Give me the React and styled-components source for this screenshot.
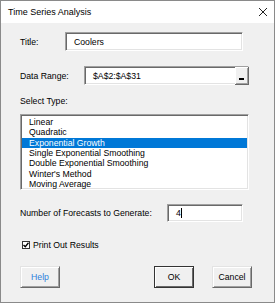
import React from "react";
import styled, { createGlobalStyle } from "styled-components";

const Global = createGlobalStyle`
  body {
    margin: 0;
    background: #ffffff;
    font-family: "Liberation Sans", Arial, sans-serif;
  }
`;

const Window = styled.div`
  width: 275px;
  height: 303px;
  box-sizing: border-box;
  border: 1px solid #8a8a8a;
  display: flex;
  flex-direction: column;
  background: #f0f0f0;
`;

const TitleBar = styled.div`
  height: 22px;
  background: #ffffff;
  display: flex;
  align-items: center;
  justify-content: space-between;
  padding: 0 6px 0 7px;
  font-size: 9px;
  color: #000;
`;

const Body = styled.div`
  flex: 1;
  display: flex;
  flex-direction: column;
  padding-left: 19px;
  font-size: 8.7px;
  color: #000;
`;

const Row = styled.div`
  display: flex;
  align-items: center;
  height: ${({ h }) => h}px;
  margin-top: ${({ top }) => top}px;
`;

const Label = styled.div`
  width: ${({ w }) => w}px;
  flex-shrink: 0;
  white-space: nowrap;
`;

const Field = styled.div`
  width: ${({ w }) => w}px;
  height: 100%;
  box-sizing: border-box;
  background: #ffffff;
  border: 1px solid;
  border-color: #a0a0a0 #ffffff #ffffff #a0a0a0;
  box-shadow: inset 1px 1px #696969, inset -1px -1px #e3e3e3;
  display: flex;
  align-items: center;
  padding-left: 8px;
`;

const FieldText = styled.span`
  flex: 1;
  white-space: nowrap;
`;

const Caret = styled.span`
  display: inline-block;
  width: 1px;
  height: 10px;
  background: #000;
  vertical-align: middle;
  margin-left: 0;
`;

const RefButton = styled.div`
  width: 14px;
  align-self: stretch;
  margin: 0 -1px -1px 0;
  box-sizing: border-box;
  background: #f0f0f0;
  border-right: 1px solid #696969;
  border-bottom: 1px solid #696969;
  box-shadow: inset 1px 1px #ffffff, inset -1px -1px #a0a0a0;
  display: flex;
  align-items: flex-end;
  justify-content: center;
  padding-bottom: 4px;
`;

const RefBar = styled.span`
  width: 5px;
  height: 2px;
  background: #000;
`;

const SectionLabel = styled.div`
  margin-top: 10px;
  height: 12px;
  line-height: 12px;
`;

const ListBox = styled.div`
  margin-top: 7px;
  width: 229px;
  height: 76px;
  box-sizing: border-box;
  background: #ffffff;
  border: 1px solid;
  border-color: #a0a0a0 #ffffff #ffffff #a0a0a0;
  box-shadow: inset 1px 1px #696969, inset -1px -1px #e3e3e3;
  padding: 2px 1px 0 1px;
`;

const ListItem = styled.div`
  height: 10.33px;
  line-height: 10.33px;
  padding-left: 7px;
  white-space: nowrap;
  background: ${({ selected }) => (selected ? "#0078d7" : "transparent")};
  color: ${({ selected }) => (selected ? "#ffffff" : "#000")};
`;

const CheckBox = styled.span`
  width: 8px;
  height: 8px;
  box-sizing: border-box;
  margin-left: 2px;
  margin-right: 3px;
  border: 1px solid #333;
  background: #fff;
  display: flex;
  align-items: center;
  justify-content: center;
`;

const ButtonRow = styled.div`
  margin-top: 17px;
  width: 232px;
  height: 22px;
  display: flex;
  justify-content: space-between;
`;

const ButtonGroup = styled.div`
  display: flex;
  gap: 18px;
`;

const Button = styled.div`
  width: 40px;
  height: 22px;
  box-sizing: border-box;
  background: #f0f0f0;
  border: 1px solid;
  border-color: ${({ primary }) =>
    primary ? "#333 #333 #333 #333" : "#e3e3e3 #696969 #696969 #e3e3e3"};
  box-shadow: ${({ primary }) =>
    primary
      ? "inset 1px 1px #ffffff, inset -1px -1px #696969"
      : "inset 1px 1px #ffffff, inset -1px -1px #a0a0a0"};
  display: flex;
  align-items: center;
  justify-content: center;
  color: ${({ link }) => (link ? "#2f80dc" : "#000")};
`;

const types = [
  "Linear",
  "Quadratic",
  "Exponential Growth",
  "Single Exponential Smoothing",
  "Double Exponential Smoothing",
  "Winter's Method",
  "Moving Average",
];

export default function App() {
  return (
    <>
      <Global />
      <Window>
        <TitleBar>
          <span>Time Series Analysis</span>
          <svg width="10" height="10" viewBox="0 0 10 10">
            <path d="M1 1 L9 9 M9 1 L1 9" stroke="#222" strokeWidth="1" />
          </svg>
        </TitleBar>
        <Body>
          <Row h={19} top={9}>
            <Label w={45}>Title:</Label>
            <Field w={178}>
              <FieldText>Coolers</FieldText>
            </Field>
          </Row>
          <Row h={19} top={15}>
            <Label w={64}>Data Range:</Label>
            <Field w={165}>
              <FieldText>$A$2:$A$31</FieldText>
              <RefButton>
                <RefBar />
              </RefButton>
            </Field>
          </Row>
          <SectionLabel>Select Type:</SectionLabel>
          <ListBox>
            {types.map((t) => (
              <ListItem key={t} selected={t === "Exponential Growth"}>
                {t}
              </ListItem>
            ))}
          </ListBox>
          <Row h={18} top={14}>
            <Label w={147}>Number of Forecasts to Generate:</Label>
            <Field w={76}>
              <FieldText>
                4<Caret />
              </FieldText>
            </Field>
          </Row>
          <Row h={9} top={18}>
            <CheckBox>
              <svg width="6" height="6" viewBox="0 0 6 6">
                <path d="M0.5 3 L2.3 4.8 L5.5 0.8" stroke="#000" strokeWidth="1.4" fill="none" />
              </svg>
            </CheckBox>
            <span>Print Out Results</span>
          </Row>
          <ButtonRow>
            <Button link>Help</Button>
            <ButtonGroup>
              <Button primary>OK</Button>
              <Button>Cancel</Button>
            </ButtonGroup>
          </ButtonRow>
        </Body>
      </Window>
    </>
  );
}
